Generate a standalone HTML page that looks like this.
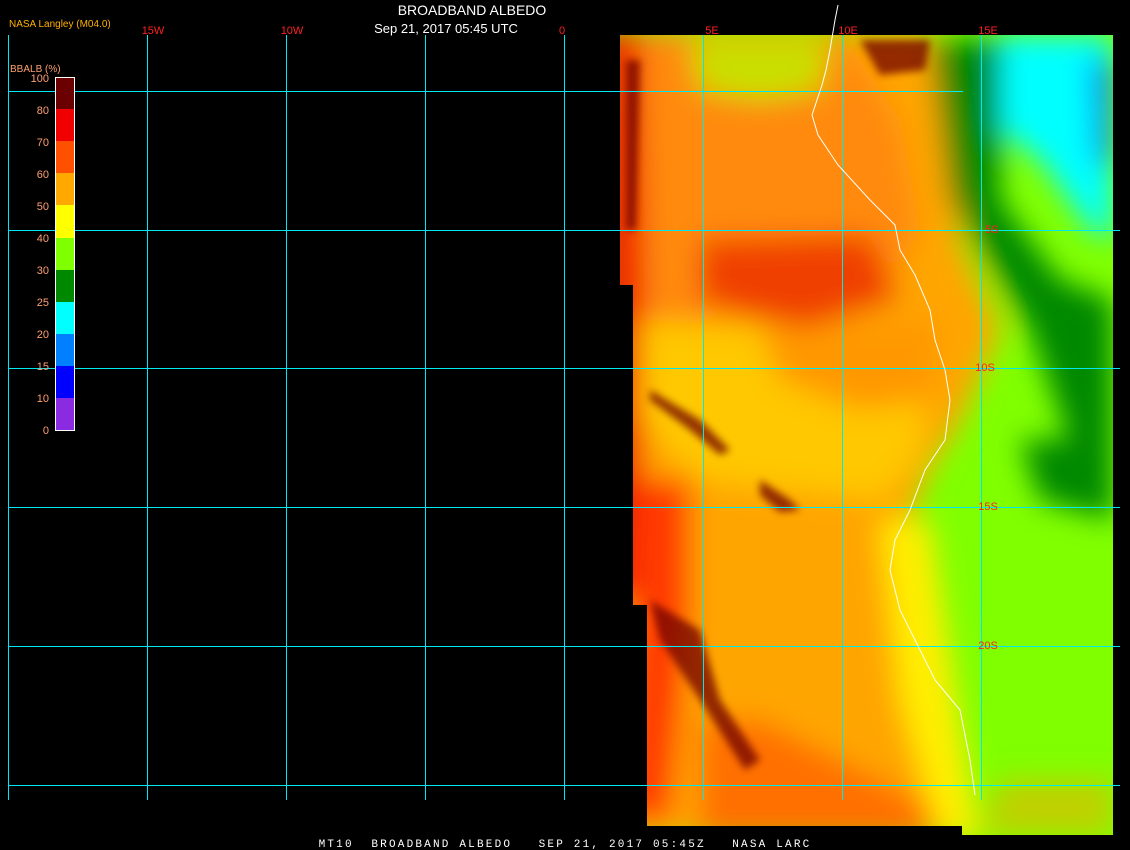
<!DOCTYPE html>
<html><head><meta charset="utf-8"><style>
html,body{margin:0;padding:0;background:#000;width:1130px;height:850px;overflow:hidden}
svg{display:block}
text{font-family:"Liberation Sans",sans-serif}
</style></head><body>
<svg width="1130" height="850" viewBox="0 0 1130 850" xmlns="http://www.w3.org/2000/svg">
<defs>
<clipPath id="img"><polygon points="620,35 1113,35 1113,835 962,835 962,826 647,826 647,605 633,605 633,285 620,285"/></clipPath>
<filter id="b" x="-50%" y="-50%" width="200%" height="200%"><feGaussianBlur stdDeviation="14"/></filter>
<filter id="b2" x="-50%" y="-50%" width="200%" height="200%"><feGaussianBlur stdDeviation="4"/></filter>
</defs>
<rect width="1130" height="850" fill="#000"/>
<g clip-path="url(#img)">
<rect x="600" y="30" width="520" height="810" fill="#80ff00"/>
<g filter="url(#b)">
<polygon points="600,30 930,30 945,120 960,240 1000,330 960,420 930,470 900,540 890,620 930,700 970,780 980,840 600,840" fill="#ffa500"/>
<polygon points="600,30 840,30 900,120 920,230 880,300 760,330 650,320 600,300" fill="#ff8a10"/>
<polygon points="690,40 830,40 820,90 760,100 700,90" fill="#c8e000"/>
<polygon points="600,30 640,30 645,300 640,600 600,600" fill="#f02000"/>
<polygon points="700,240 870,235 900,300 800,330 700,300" fill="#f04000"/>
<polygon points="640,320 880,330 930,380 920,460 880,500 700,480 640,420" fill="#ffc800"/>
<polygon points="760,330 940,320 930,400 860,410 780,380" fill="#ff9800"/>
<polygon points="640,480 690,480 690,620 670,820 620,820" fill="#ff3a00"/>
<polygon points="700,720 760,720 900,790 960,840 700,840" fill="#ff7000"/>
<polygon points="880,520 930,520 960,720 980,840 940,840 900,700" fill="#ffee00"/>
<polygon points="930,40 1000,40 1000,200 1060,280 1113,300 1113,500 1080,470 1030,330 950,200" fill="#008800"/>
<polygon points="1000,35 1113,35 1113,240 1090,230 1040,160 1000,130" fill="#00ffff"/>
<polygon points="1090,60 1113,60 1113,170 1095,160" fill="#0080ff"/>
<polygon points="1020,440 1113,440 1113,520 1040,500" fill="#008800"/>
<polygon points="1000,780 1113,780 1113,835 980,835" fill="#c0d000"/>
</g>
<g filter="url(#b2)" fill="#700000" opacity=".75">
<polygon points="650,390 700,420 730,450 720,455 690,430 650,400"/>
<polygon points="760,480 790,500 800,510 780,512 760,495"/>
<polygon points="860,40 930,40 925,70 880,75"/>
<polygon points="650,600 700,630 720,700 760,760 745,770 700,700 660,640"/>
<polygon points="626,60 640,60 636,230 626,230"/>
</g>
</g>
<g fill="#00e8f0" shape-rendering="crispEdges">
<rect x="8" y="35" width="1" height="765"/>
<rect x="147" y="35" width="1" height="765"/>
<rect x="286" y="35" width="1" height="765"/>
<rect x="425" y="35" width="1" height="765"/>
<rect x="564" y="35" width="1" height="765"/>
<rect x="703" y="35" width="1" height="765"/>
<rect x="842" y="35" width="1" height="765"/>
<rect x="981" y="35" width="1" height="765"/>
<rect x="8" y="91" width="955" height="1"/>
<rect x="8" y="230" width="1112" height="1"/>
<rect x="8" y="368" width="1112" height="1"/>
<rect x="8" y="507" width="1112" height="1"/>
<rect x="8" y="646" width="1112" height="1"/>
<rect x="8" y="785" width="1112" height="1"/>
</g>
<polyline fill="none" stroke="#fff" stroke-width="1" points="838,5 835,20 830,50 826,70 822,85 812,115 818,135 838,165 870,200 895,225 900,250 915,275 930,310 935,340 945,370 950,400 945,440 925,470 910,510 895,540 890,570 900,610 915,640 935,680 960,710 970,760 975,795"/>
<g shape-rendering="crispEdges">
<rect x="56" y="77" width="18" height="33" fill="#6b0000"/>
<rect x="56" y="109" width="18" height="32" fill="#f00000"/>
<rect x="56" y="141" width="18" height="32" fill="#ff5000"/>
<rect x="56" y="173" width="18" height="32" fill="#ffa800"/>
<rect x="56" y="205" width="18" height="33" fill="#ffff00"/>
<rect x="56" y="238" width="18" height="32" fill="#80ff00"/>
<rect x="56" y="270" width="18" height="32" fill="#008800"/>
<rect x="56" y="302" width="18" height="32" fill="#00ffff"/>
<rect x="56" y="334" width="18" height="32" fill="#0080ff"/>
<rect x="56" y="366" width="18" height="32" fill="#0000ff"/>
<rect x="56" y="398" width="18" height="32" fill="#8a2be2"/>
<rect x="55.5" y="77.5" width="19" height="353" fill="none" stroke="#fff"/>
</g>
<g fill="#ffa070" font-size="11" text-anchor="end">
<text x="49" y="82">100</text><text x="49" y="114">80</text><text x="49" y="146">70</text>
<text x="49" y="178">60</text><text x="49" y="210">50</text><text x="49" y="242">40</text>
<text x="49" y="274">30</text><text x="49" y="306">25</text><text x="49" y="338">20</text>
<text x="49" y="370">15</text><text x="49" y="402">10</text><text x="49" y="434">0</text>
</g>
<text x="10" y="72" fill="#ffa070" font-size="10">BBALB (%)</text>
<text x="9" y="27" fill="#ffb000" font-size="10">NASA Langley (M04.0)</text>
<text x="472" y="15" fill="#fff" font-size="14" text-anchor="middle">BROADBAND ALBEDO</text>
<text x="446" y="33" fill="#fff" font-size="13" text-anchor="middle">Sep 21, 2017 05:45 UTC</text>
<g fill="#ff2020" font-size="11" text-anchor="middle" style="font-family:'Liberation Mono',monospace">
<text x="153" y="34">15W</text><text x="292" y="34">10W</text><text x="562" y="34">0</text>
<text x="712" y="34">5E</text><text x="848" y="34">10E</text><text x="988" y="34">15E</text>
<text x="992" y="233">5S</text><text x="985" y="371">10S</text><text x="988" y="510">15S</text><text x="988" y="649">20S</text>
</g>
<text x="565" y="847" fill="#fff" font-size="11" text-anchor="middle" style="font-family:'Liberation Mono',monospace;letter-spacing:2.2px;white-space:pre" xml:space="preserve">MT10  BROADBAND ALBEDO   SEP 21, 2017 05:45Z   NASA LARC</text>
</svg>
</body></html>
